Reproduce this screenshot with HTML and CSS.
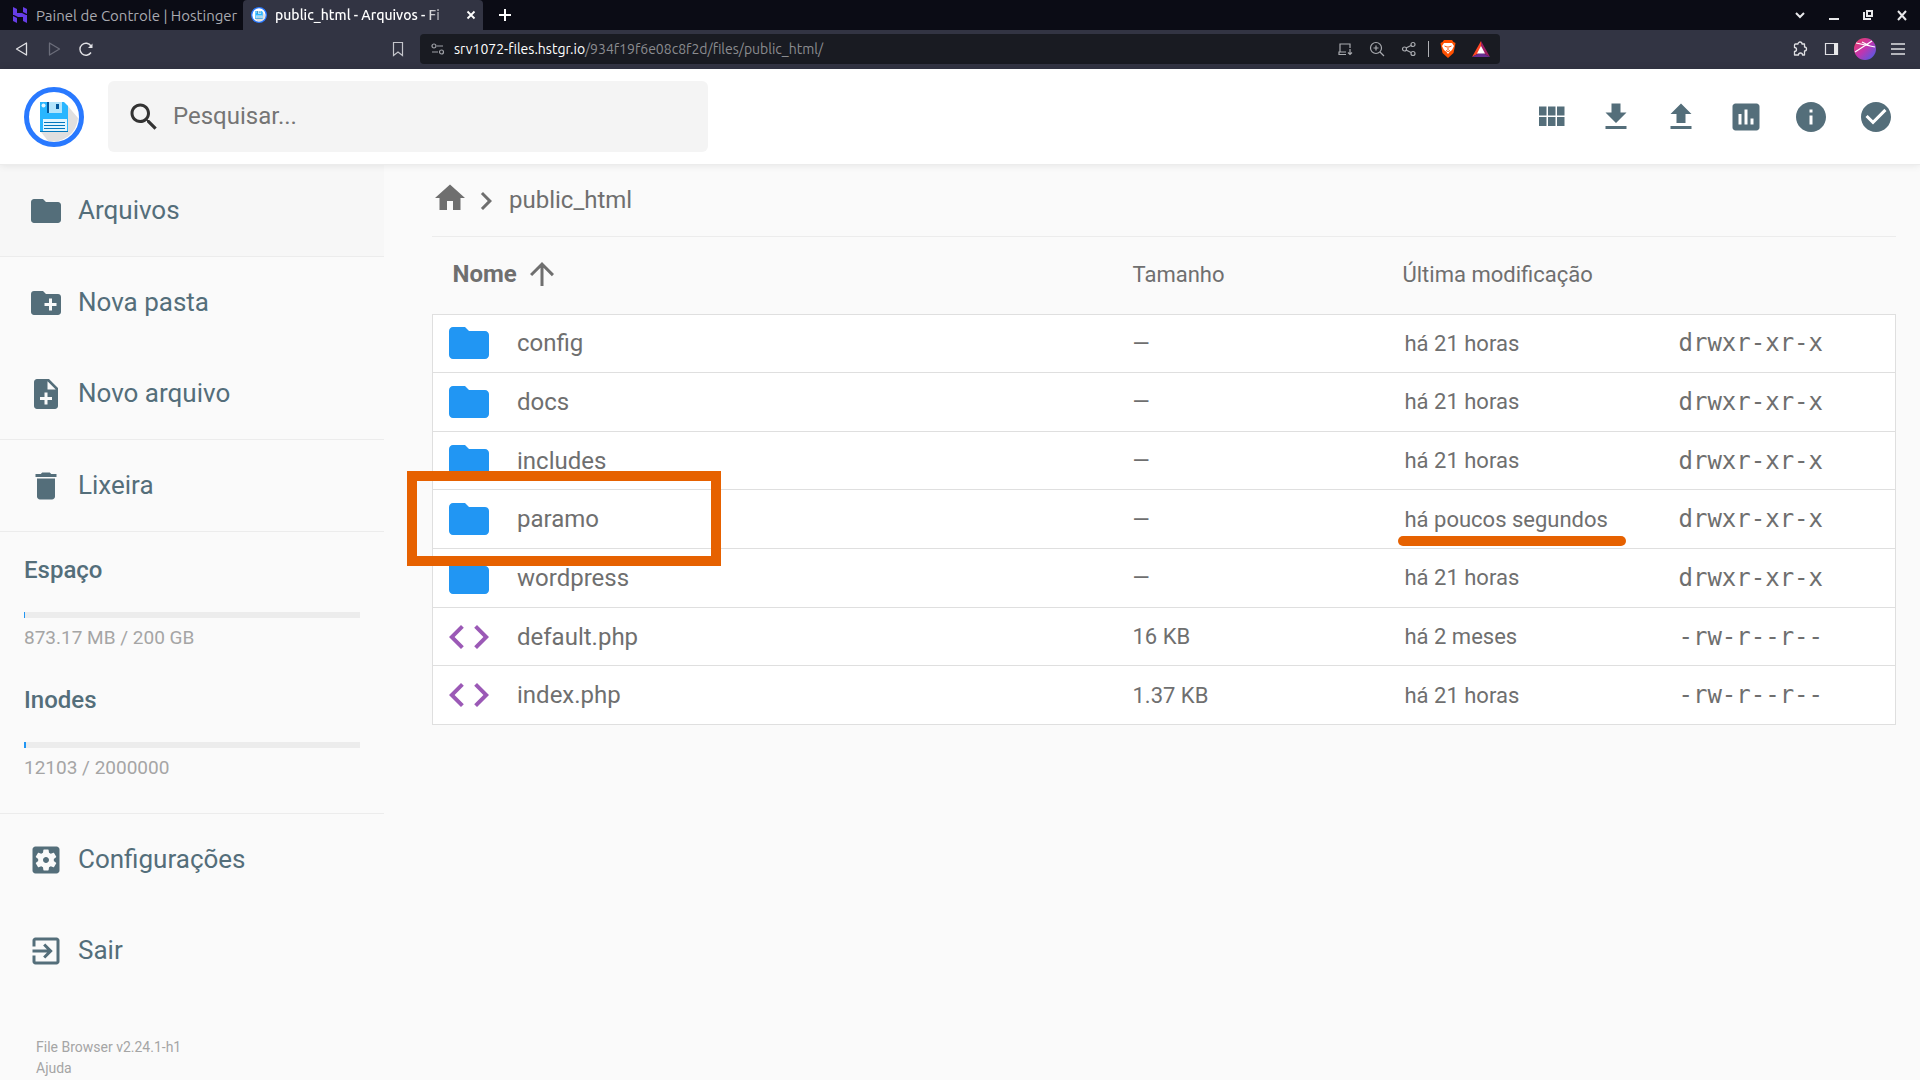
FILE: index.html
```html
<!DOCTYPE html>
<html lang="pt-BR">
<head>
    <meta charset="UTF-8">
    <title>public_html - Arquivos - File Browser</title>
    <link rel="stylesheet" href="styles.css">
</head>
<body>
<!-- shared icons -->
<svg class="defs" width="0" height="0">
    <symbol id="folder" viewBox="0 0 24 24"><path d="M10 4H4c-1.100 0-1.990.9-1.990 2L2 18c0 1.100.9 2 2 2h16c1.100 0 2-.9 2-2V8c0-1.100-.9-2-2-2h-8l-2-2z"/></symbol>
    <symbol id="code" viewBox="0 0 24 24"><path d="M9.400 16.600L4.800 12l4.600-4.600L8 6l-6 6 6 6 1.400-1.400zm5.200 0l4.600-4.600-4.600-4.600L16 6l6 6-6 6-1.400-1.400z"/></symbol>
    <symbol id="logo" viewBox="0 0 60 60">
        <circle cx="30" cy="30" r="27.500" fill="#fff"/>
        <path d="M43 18L54 31A25 25 0 0 1 24 54L17 45z" fill="#e0dfdf"/>
        <path d="M16 15h24l4 4v26H16z" fill="#29b6ff"/>
        <path d="M23 15h15v11H23z" fill="#b3e5fc"/>
        <path d="M23 15h2v11h-2zM32 17h3v5h-3z" fill="#01579b"/>
        <path d="M19 32h24v12H19z" fill="#e1f5fe"/>
        <path d="M16 44h28v1H16zM20 35h21v1H20zM20 38h21v1H20zM20 41h21v1H20z" fill="#0277bd"/>
        <circle cx="19.500" cy="18.500" r="2" fill="#e1f5fe"/>
        <circle cx="30" cy="30" r="27.500" fill="none" stroke="#2979ff" stroke-width="5"/>
    </symbol>
</svg>

<div class="tabs">
    <div class="tab">
        <svg width="16" height="16" viewBox="0 0 16 16" fill="#673de6"><path d="M1 0l4 2v4h5l4 2H1zM11 0l4 2v5l-4-2zM1 9l4 2v5l-4-2zM2 8h13v8l-4-2v-4H6z"/></svg>
        <span class="tab-title">Painel de Controle | Hostinger</span>
    </div>
    <div class="tab active">
        <svg width="16" height="16"><use href="#logo"/></svg>
        <span class="tab-title">public_html - Arquivos - Fi</span>
        <button class="close" aria-label="Fechar"><svg width="10" height="10" viewBox="0 0 10 10"><path d="M1.500 1.500l7 7M8.500 1.500l-7 7" stroke="#fff" stroke-width="1.800"/></svg></button>
    </div>
    <button class="new-tab" aria-label="Nova guia"><svg width="12" height="12" viewBox="0 0 12 12"><path d="M6 0v12M0 6h12" stroke="#fff" stroke-width="2"/></svg></button>
    <div class="window-buttons">
        <button aria-label="Guias"><svg width="14" height="14" viewBox="0 0 14 14"><path d="M3 5l4 4 4-4" fill="none" stroke="#e8e8ea" stroke-width="2"/></svg></button>
        <button aria-label="Minimizar"><svg width="14" height="14" viewBox="0 0 14 14"><path d="M2 10h10v2H2z" fill="#e8e8ea"/></svg></button>
        <button aria-label="Restaurar"><svg width="14" height="14" viewBox="0 0 14 14"><path d="M6 3h5v5H6zM3 4v7h7" fill="none" stroke="#e8e8ea" stroke-width="2"/></svg></button>
        <button aria-label="Fechar janela"><svg width="14" height="14" viewBox="0 0 14 14"><path d="M3 3l8 9M11 3l-8 9" stroke="#e8e8ea" stroke-width="2"/></svg></button>
    </div>
</div>

<div class="toolbar">
    <div class="nav">
        <button aria-label="Voltar"><svg width="16" height="16" viewBox="0 0 16 16"><path d="M12.500 2v12L2.500 8z" fill="none" stroke="#e0e0e4" stroke-width="1.300" stroke-linejoin="round"/></svg></button>
        <button aria-label="Avançar"><svg width="16" height="16" viewBox="0 0 16 16"><path d="M3.500 2v12L13.500 8z" fill="none" stroke="#6b6d7a" stroke-width="1.300" stroke-linejoin="round"/></svg></button>
        <button aria-label="Recarregar"><svg width="16" height="16" viewBox="0 0 16 16"><path d="M13 11.500A6 6 0 1 1 13 5" fill="none" stroke="#e0e0e4" stroke-width="1.400"/><path d="M14.500 2.500V7H10z" fill="#e0e0e4"/></svg></button>
    </div>
    <button class="bookmark" aria-label="Favoritos"><svg width="16" height="16" viewBox="0 0 16 16"><path d="M3.500 1.500h9v13L8 11l-4.500 3.500z" fill="none" stroke="#c4c5cb" stroke-width="1.200"/></svg></button>
    <div class="address">
        <svg width="14" height="14" viewBox="0 0 14 14" fill="none" stroke="#a0a2a8" stroke-width="1.200"><circle cx="3" cy="4" r="2"/><path d="M6 4h6M1 10h6"/><circle cx="10.500" cy="10" r="2"/></svg>
        <span class="url"><b>srv1072-files.hstgr.io</b>/934f19f6e08c8f2d/files/public_html/</span>
        <button aria-label="Instalar"><svg width="16" height="16" viewBox="0 0 16 16" fill="none" stroke="#a9abb0" stroke-width="1.200"><path d="M13 7V3H3v8M9 13.500H2v-2.500h7M13 8v5.500M11 11.500l2 2 2-2"/></svg></button>
        <button aria-label="Zoom"><svg width="16" height="16" viewBox="0 0 16 16" fill="none" stroke="#a9abb0" stroke-width="1.200"><circle cx="7" cy="7" r="5.500"/><path d="M11 11l4 4M7 4.500v5M4.500 7h5"/></svg></button>
        <button aria-label="Compartilhar"><svg width="16" height="16" viewBox="0 0 16 16" fill="none" stroke="#a9abb0" stroke-width="1.200"><circle cx="3.500" cy="8" r="2"/><circle cx="12" cy="3.500" r="2"/><circle cx="12" cy="12.500" r="2"/><path d="M5 7l5-2.500M5 9l5 2.500"/></svg></button>
        <span class="divider"></span>
        <button aria-label="Brave Shields"><svg width="16" height="18" viewBox="0 0 16 18"><path d="M4 0h8l1.500 2 2 1-.5 3-1.500 7L8 18l-5.500-5L1 6 .5 3l2-1z" fill="#ff5000"/><path d="M4 3h8l2 3-2 4-2.500 2L8 14l-1.500-2L4 10 2 6z" fill="#fff"/><path d="M4.500 6l2.500 1M11.500 6L9 7M8 6v4M6 10.500l2 1 2-1" stroke="#ff5000" fill="none"/></svg></button>
        <button aria-label="Brave Rewards"><svg width="18" height="16" viewBox="0 0 18 16"><path d="M9 0L0 16l9-5z" fill="#ff4724"/><path d="M9 0l9 16-9-5z" fill="#9e1f63"/><path d="M0 16h18l-9-5z" fill="#662d91"/><path d="M9 5l4 7.500H5z" fill="#fff"/></svg></button>
    </div>
    <div class="extras">
        <button aria-label="Extensões"><svg width="16" height="16" viewBox="0 0 16 16"><path d="M3.500 3H6a2 2 0 0 1 4 0h2.500v3a2 2 0 0 1 0 4v4H10.500a2 2 0 0 0-4 0H2.500v-3.500a2 2 0 0 0 0-4V4a1 1 0 0 1 1-1z" fill="none" stroke="#e0e0e4" stroke-width="1.300" stroke-linejoin="round"/></svg></button>
        <button aria-label="Barra lateral"><svg width="16" height="16" viewBox="0 0 16 16"><path d="M1.500 2.500h12v11h-12z" fill="none" stroke="#e0e0e4" stroke-width="1.200"/><path d="M10 2h4v12h-4z" fill="#e8e8ea"/></svg></button>
        <button class="profile" aria-label="Perfil"><svg width="22" height="22" viewBox="0 0 22 22"><defs><linearGradient id="profile" x2="1" y2="1"><stop offset="0" stop-color="#f0405e"/><stop offset=".5" stop-color="#c035b0"/><stop offset="1" stop-color="#3b63f0"/></linearGradient></defs><circle cx="11" cy="11" r="11" fill="url(#profile)"/><path d="M1 14L18 3M2 5l19 4M8 4l8 4" stroke="#fff" stroke-width="1.200"/></svg></button>
        <button aria-label="Menu"><svg width="16" height="16" viewBox="0 0 16 16"><path d="M1 3h14M1 8h14M1 13h14" stroke="#e0e0e4" stroke-width="1.400"/></svg></button>
    </div>
</div>

<header>
    <svg class="logo" width="60" height="60"><use href="#logo"/></svg>
    <label class="search">
        <svg class="icon" viewBox="0 0 24 24"><path d="M15.500 14h-.79l-.28-.27C15.410 12.590 16 11.110 16 9.500 16 5.910 13.090 3 9.500 3S3 5.910 3 9.500 5.910 16 9.500 16c1.610 0 3.090-.59 4.230-1.570l.27.28v.79l5 4.990L20.490 19l-4.990-5zm-6 0C7.010 14 5 11.990 5 9.500S7.010 5 9.500 5 14 7.010 14 9.500 11.990 14 9.500 14z"/></svg>
        <input type="text" placeholder="Pesquisar..." aria-label="Pesquisar">
    </label>
    <div class="actions">
        <button aria-label="Mudar visualização"><svg class="icon" viewBox="0 0 24 24"><path d="M4 11h5V5H4v6zm0 7h5v-6H4v6zm6 0h5v-6h-5v6zm6 0h5v-6h-5v6zm-6-7h5V5h-5v6zm6-6v6h5V5h-5z"/></svg></button>
        <button aria-label="Baixar"><svg class="icon" viewBox="0 0 24 24"><path d="M19 9h-4V3H9v6H5l7 7 7-7zM5 18v2h14v-2H5z"/></svg></button>
        <button aria-label="Enviar"><svg class="icon" viewBox="0 0 24 24"><path d="M9 16h6v-6h4l-7-7-7 7h4zm-4 2h14v2H5z"/></svg></button>
        <button aria-label="Estatísticas"><svg class="icon" viewBox="0 0 24 24"><path d="M19 3H5c-1.100 0-2 .9-2 2v14c0 1.100.9 2 2 2h14c1.100 0 2-.9 2-2V5c0-1.100-.9-2-2-2zM9 17H7v-7h2v7zm4 0h-2V7h2v10zm4 0h-2v-4h2v4z"/></svg></button>
        <button aria-label="Informações"><svg class="icon" viewBox="0 0 24 24"><path d="M12 2C6.480 2 2 6.480 2 12s4.480 10 10 10 10-4.480 10-10S17.520 2 12 2zm1 15h-2v-6h2v6zm0-8h-2V7h2v2z"/></svg></button>
        <button aria-label="Selecionar vários"><svg class="icon" viewBox="0 0 24 24"><path d="M12 2C6.480 2 2 6.480 2 12s4.480 10 10 10 10-4.480 10-10S17.520 2 12 2zm-2 15l-5-5 1.410-1.410L10 14.170l7.590-7.590L19 8l-9 9z"/></svg></button>
    </div>
</header>

<div class="content">
    <nav class="sidebar">
        <div class="group">
            <button class="item current"><svg class="icon"><use href="#folder"/></svg><span>Arquivos</span></button>
        </div>
        <div class="group">
            <button class="item"><svg class="icon" viewBox="0 0 24 24"><path d="M20 6h-8l-2-2H4c-1.110 0-1.990.89-1.990 2L2 18c0 1.110.89 2 2 2h16c1.110 0 2-.89 2-2V8c0-1.110-.89-2-2-2zm-1 8h-3v3h-2v-3h-3v-2h3V9h2v3h3v2z"/></svg><span>Nova pasta</span></button>
            <button class="item"><svg class="icon" viewBox="0 0 24 24"><path d="M14 2H6c-1.100 0-1.990.9-1.990 2L4 20c0 1.100.89 2 1.990 2H18c1.100 0 2-.9 2-2V8l-6-6zm2 14h-3v3h-2v-3H8v-2h3v-3h2v3h3v2zm-3-7V3.500L18.500 9H13z"/></svg><span>Novo arquivo</span></button>
        </div>
        <div class="group">
            <button class="item"><svg class="icon" viewBox="0 0 24 24"><path d="M6 19c0 1.100.9 2 2 2h8c1.100 0 2-.9 2-2V7H6v12zM19 4h-3.500l-1-1h-5l-1 1H5v2h14V4z"/></svg><span>Lixeira</span></button>
        </div>
        <div class="group usage">
            <h3>Espaço</h3>
            <div class="bar"><div class="bar-fill" style="width: 1px"></div></div>
            <p>873.17 MB / 200 GB</p>
            <h3>Inodes</h3>
            <div class="bar"><div class="bar-fill" style="width: 2px"></div></div>
            <p>12103 / 2000000</p>
        </div>
        <div class="group">
            <button class="item"><svg class="icon" viewBox="0 0 24 24"><path d="M12 10c-1.100 0-2 .9-2 2s.9 2 2 2 2-.9 2-2-.9-2-2-2zm7-7H5c-1.110 0-2 .9-2 2v14c0 1.100.89 2 2 2h14c1.110 0 2-.9 2-2V5c0-1.100-.89-2-2-2zm-1.750 9c0 .23-.02.46-.05.68l1.480 1.160c.13.11.17.3.080.45l-1.400 2.420c-.09.15-.27.21-.43.15l-1.740-.7c-.36.28-.76.51-1.180.69l-.26 1.850c-.03.170-.18.300-.35.300h-2.800c-.17 0-.32-.13-.35-.29l-.26-1.850c-.43-.18-.82-.41-1.180-.69l-1.740.7c-.16.060-.34 0-.43-.15l-1.400-2.420c-.09-.15-.05-.34.080-.45l1.480-1.160c-.03-.23-.05-.46-.05-.69s.02-.46.05-.68l-1.480-1.160c-.13-.11-.17-.3-.08-.45l1.400-2.420c.09-.15.27-.21.43-.15l1.740.7c.36-.28.76-.51 1.180-.69l.26-1.850c.03-.17.18-.3.35-.3h2.800c.17 0 .32.130.35.290l.26 1.850c.43.18.82.41 1.180.69l1.740-.7c.16-.06.34 0 .43.15l1.400 2.420c.09.15.05.34-.08.45l-1.480 1.160c.03.23.05.46.05.69z"/></svg><span>Configurações</span></button>
            <button class="item"><svg class="icon" viewBox="0 0 24 24"><path d="M10.090 15.590L11.500 17l5-5-5-5-1.410 1.410L12.670 11H3v2h9.670l-2.580 2.590zM19 3H5c-1.110 0-2 .9-2 2v4h2V5h14v14H5v-4H3v4c0 1.100.89 2 2 2h14c1.100 0 2-.9 2-2V5c0-1.100-.9-2-2-2z"/></svg><span>Sair</span></button>
        </div>
        <div class="credits">
            <div>File Browser v2.24.1-h1</div>
            <a href="#">Ajuda</a>
        </div>
    </nav>

    <main>
        <div class="breadcrumbs">
            <a class="home" href="#" aria-label="Início"><svg class="icon" viewBox="0 0 24 24"><path d="M10 20v-6h4v6h5v-8h3L12 3 2 12h3v8z"/></svg></a>
            <svg class="chevron" viewBox="0 0 24 24"><path d="M10 6L8.590 7.410 13.170 12l-4.580 4.590L10 18l6-6z"/></svg>
            <a href="#">public_html</a>
        </div>
        <table>
            <thead>
            <tr>
                <th class="name"><span>Nome <svg class="icon" viewBox="0 0 24 24"><path d="M4 12l1.410 1.410L11 7.830V20h2V7.830l5.580 5.590L20 12l-8-8-8 8z"/></svg></span></th>
                <th class="size">Tamanho</th>
                <th class="modified">Última modificação</th>
                <th class="mode"></th>
            </tr>
            </thead>
            <tbody>
            <tr>
                <td><div class="file"><svg><use href="#folder"/></svg>config</div></td>
                <td class="size">—</td>
                <td class="modified">há 21 horas</td>
                <td class="mode">drwxr-xr-x</td>
            </tr>
            <tr>
                <td><div class="file"><svg><use href="#folder"/></svg>docs</div></td>
                <td class="size">—</td>
                <td class="modified">há 21 horas</td>
                <td class="mode">drwxr-xr-x</td>
            </tr>
            <tr>
                <td><div class="file"><svg><use href="#folder"/></svg>includes</div></td>
                <td class="size">—</td>
                <td class="modified">há 21 horas</td>
                <td class="mode">drwxr-xr-x</td>
            </tr>
            <tr>
                <td><div class="file"><svg><use href="#folder"/></svg>paramo</div><span class="mark-box"></span></td>
                <td class="size">—</td>
                <td class="modified">há poucos segundos<span class="mark-line"></span></td>
                <td class="mode">drwxr-xr-x</td>
            </tr>
            <tr>
                <td><div class="file"><svg><use href="#folder"/></svg>wordpress</div></td>
                <td class="size">—</td>
                <td class="modified">há 21 horas</td>
                <td class="mode">drwxr-xr-x</td>
            </tr>
            <tr>
                <td><div class="file code"><svg><use href="#code"/></svg>default.php</div></td>
                <td class="size">16 KB</td>
                <td class="modified">há 2 meses</td>
                <td class="mode">-rw-r--r--</td>
            </tr>
            <tr>
                <td><div class="file code"><svg><use href="#code"/></svg>index.php</div></td>
                <td class="size">1.37 KB</td>
                <td class="modified">há 21 horas</td>
                <td class="mode">-rw-r--r--</td>
            </tr>
            </tbody>
        </table>
    </main>
</div>
</body>
</html>
```

FILE: styles.css
```css
* {
    box-sizing: border-box;
}

body {
    margin: 0;
    background-color: #fafafa;
    font-family: Roboto, sans-serif;
    font-size: 24px;
    color: #6f6f6f;
}

button {
    display: flex;
    align-items: center;
    padding: 0;
    border: 0;
    background: none;
    font: inherit;
    color: inherit;
    cursor: pointer;
}

a {
    color: inherit;
    text-decoration: none;
}

svg {
    display: block;
    flex: none;
}

.defs {
    position: absolute;
}

.icon {
    width: 36px;
    height: 36px;
    fill: currentColor;
}

/* browser window */
.tabs {
    display: flex;
    height: 30px;
    background-color: #0b0c15;
    font-family: Ubuntu, "Noto Sans", sans-serif;
    font-size: 15px;
    color: #a9aab0;
}

.tab {
    display: flex;
    align-items: center;
    gap: 8px;
    width: 243px;
    padding: 0 0 0 12px;
    white-space: nowrap;
}

.tab-title {
    flex: 1;
}

.tab.active {
    width: 240px;
    padding: 0 7px 0 8px;
    border-radius: 4px 4px 0 0;
    background-color: #323443;
    font-size: 14px;
    font-weight: 500;
    color: #fff;
}

.active .tab-title {
    -webkit-mask-image: linear-gradient(to right, #000 150px, transparent 180px);
    mask-image: linear-gradient(to right, #000 150px, transparent 180px);
}

.new-tab {
    margin-left: 16px;
}

.window-buttons {
    display: flex;
    gap: 20px;
    margin-left: auto;
    padding-right: 11px;
}

.toolbar {
    display: flex;
    align-items: center;
    height: 39px;
    padding-bottom: 1px;
    background-color: #323443;
    font-family: Ubuntu, "Noto Sans", sans-serif;
    font-size: 14px;
}

.nav {
    display: flex;
    gap: 16px;
    padding-left: 14px;
}

.bookmark {
    margin-left: auto;
}

.address {
    display: flex;
    align-items: center;
    gap: 16px;
    width: 1080px;
    height: 30px;
    margin-left: 14px;
    padding: 0 10px 0 11px;
    border-radius: 4px;
    background-color: #191b22;
}

.url {
    flex: 1;
    margin-left: -7px;
    color: #8b8c90;
}

.url b {
    font-weight: normal;
    color: #fff;
}

.divider {
    width: 1px;
    height: 16px;
    margin: 0 -5px;
    background-color: #b0b1b6;
}

.extras {
    display: flex;
    align-items: center;
    justify-content: flex-end;
    gap: 16px;
    width: 420px;
    padding-right: 14px;
}

.profile {
    margin: 0 -2px;
}

/* file browser */
header {
    position: relative;
    display: flex;
    align-items: center;
    height: 96px;
    padding: 0 14px 0 24px;
    border-bottom: 1px solid #ececec;
    background-color: #fff;
    box-shadow: 0 0 8px rgba(0, 0, 0, 0.1);
    color: #546e7a;
}

.search {
    display: flex;
    align-items: center;
    gap: 11px;
    width: 600px;
    height: 71px;
    margin-left: 24px;
    padding: 0 18px;
    border-radius: 6px;
    background-color: #f4f4f4;
    color: #333;
}

.search input {
    flex: 1;
    padding: 0 0 2px;
    border: 0;
    background: none;
    font: inherit;
    outline: 0;
}

.search input::placeholder {
    color: #757575;
}

.actions {
    display: flex;
    gap: 5px;
    margin-left: auto;
}

.actions button {
    padding: 12px;
}

.content {
    display: flex;
}

.sidebar {
    width: 384px;
    color: #546e7a;
}

.group {
    border-bottom: 1px solid #ececec;
}

.group:nth-last-child(2) {
    border-bottom: 0;
}

.item {
    gap: 14px;
    width: 100%;
    height: 91px;
    padding: 0 28px;
    font-size: 26px;
}

.item span {
    padding-bottom: 2px;
}

.current {
    background-color: #f7f7f7;
}

.usage {
    padding: 0 24px 21px;
}

.usage h3 {
    margin: 0;
    padding: 24px 0 28px;
    font-size: 24px;
    line-height: 28px;
    font-weight: 500;
}

.usage p {
    margin: 8px 0 12px;
    font-size: 19px;
    line-height: 24px;
    color: #a5a5a5;
}

.bar {
    height: 6px;
    background-color: #ececec;
}

.bar-fill {
    height: 100%;
    background-color: #2196f3;
}

.credits {
    padding: 41px 36px 0;
    font-size: 14px;
    line-height: 21px;
    color: #a5a5a5;
}

.credits a {
    display: block;
}

main {
    flex: 1;
    padding: 0 24px 0 48px;
}

.breadcrumbs {
    display: flex;
    align-items: center;
    height: 72px;
    border-bottom: 1px solid #ececec;
}

.home {
    margin-bottom: 6px;
}

.breadcrumbs .chevron {
    width: 36px;
    height: 36px;
    fill: currentColor;
}

.breadcrumbs a:last-child {
    margin-left: 5px;
    padding-bottom: 2px;
}

table {
    width: 100%;
    height: 488px;
    border-collapse: collapse;
    table-layout: fixed;
}

thead tr {
    height: 77px;
}

th, td {
    padding: 0;
    text-align: left;
}

th {
    padding-bottom: 2px;
    font-size: 22px;
    font-weight: normal;
}

th.name {
    padding-left: 20px;
    font-size: 24px;
    font-weight: bold;
}

th.name span {
    display: flex;
    align-items: center;
    gap: 7px;
}

tbody {
    border: 1px solid #dfdfdf;
    background-color: #fff;
}

tbody tr {
    border-top: 1px solid #dfdfdf;
}

td {
    position: relative;
}

.size {
    width: 270px;
    font-size: 22px;
}

.modified {
    width: 274px;
    font-size: 22px;
}

td.modified {
    padding-left: 2px;
}

.mode {
    width: 219px;
}

td.mode {
    padding-left: 2px;
    font-family: "DejaVu Sans Mono", monospace;
}

.file {
    display: flex;
    align-items: center;
    gap: 24px;
    padding-left: 12px;
}

.file svg {
    width: 48px;
    height: 48px;
    fill: #2196f3;
}

.file.code svg {
    fill: #9b59b6;
}

/* highlights */
.mark-box {
    position: absolute;
    z-index: 1;
    top: -19px;
    left: -26px;
    width: 314px;
    height: 95px;
    border: 10px solid #e66100;
}

.mark-line {
    position: absolute;
    left: -5px;
    bottom: 2px;
    width: 228px;
    height: 10px;
    border-radius: 5px;
    background-color: #e66100;
}
```
